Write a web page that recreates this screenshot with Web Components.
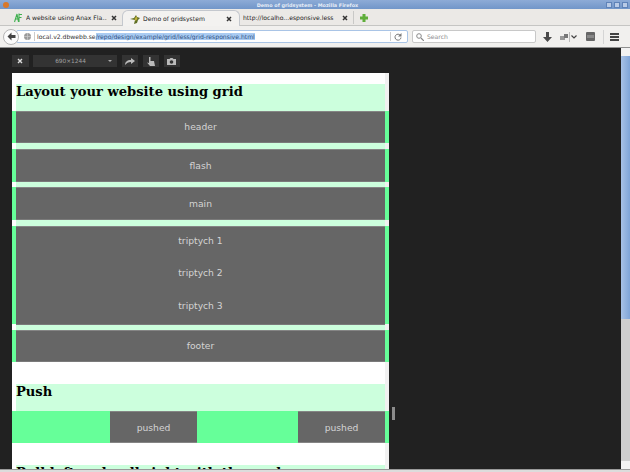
<!DOCTYPE html>
<html>
<head>
<meta charset="utf-8">
<title>Demo of gridsystem</title>
<style>
html, body { margin: 0; height: 100%; overflow: hidden; background: #212121; }
body { font-family: "DejaVu Sans", sans-serif; }
</style>
</head>
<body>
<fx-window>
    <fx-titlebar slot="top">Demo of gridsystem - Mozilla Firefox</fx-titlebar>
    <fx-tabs slot="top">
        <fx-tab icon="anax" style="width:114px">A website using Anax Fla...</fx-tab>
        <fx-tab icon="grid" active style="width:118px">Demo of gridsystem</fx-tab>
        <fx-tab style="width:113px">http://localho...esponsive.less</fx-tab>
    </fx-tabs>
    <fx-navbar slot="top"></fx-navbar>
    <rd-stage>
        <demo-page>
            <demo-heading>Layout your website using grid</demo-heading>
            <demo-row>header</demo-row>
            <demo-gap></demo-gap>
            <demo-row>flash</demo-row>
            <demo-gap></demo-gap>
            <demo-row>main</demo-row>
            <demo-gap></demo-gap>
            <demo-row tall><span>triptych 1</span><span>triptych 2</span><span>triptych 3</span></demo-row>
            <demo-gap></demo-gap>
            <demo-row>footer</demo-row>
            <demo-spacer></demo-spacer>
            <demo-heading>Push</demo-heading>
            <demo-push></demo-push>
            <demo-spacer></demo-spacer>
            <demo-heading>Pull left and pull right with the push</demo-heading>
        </demo-page>
    </rd-stage>
</fx-window>

<script>
function define(name, html) {
    customElements.define(name, class extends HTMLElement {
        constructor() {
            super();
            this.attachShadow({ mode: 'open' }).innerHTML = html;
        }
    });
}

define('fx-window', `
    <style>
        :host { display: flex; flex-direction: column; width: 630px; height: 472px; overflow: hidden; background: #212121; }
        .foot { height: 3px; background: #dcdcdc; border-top: 1px solid #9a9a9a; box-sizing: border-box; flex: none; }
    </style>
    <slot name="top"></slot>
    <slot></slot>
    <div class="foot"></div>
`);

define('fx-titlebar', `
    <style>
        :host { display: flex; align-items: center; height: 9px; flex: none; background: linear-gradient(#8dabd6, #7196c9); color: #e6edf7; font: bold 4.9px "DejaVu Sans", sans-serif; }
        .title { flex: 1; text-align: center; white-space: nowrap; }
        .logo { width: 6px; height: 6px; border-radius: 50%; background: #d9782a; margin-left: 3px; }
        .btns { display: flex; gap: 2px; margin-right: 2px; }
        .btns i { width: 4px; height: 4px; background: #b9cbe6; border: 1px solid #5f83b8; }
    </style>
    <span class="logo"></span>
    <span class="title"><slot></slot></span>
    <span class="btns"><i></i><i></i><i></i></span>
`);

define('fx-tabs', `
    <style>
        :host { display: flex; align-items: flex-end; height: 17px; box-sizing: border-box; flex: none; background: #ebe9e6; padding-left: 8px; border-bottom: 1px solid #c5c5c3; }
        .add { display: flex; align-items: center; height: 13px; padding-left: 6px; border-left: 1px solid #c9c9c7; margin-bottom: 1px; }
    </style>
    <slot></slot>
    <div class="add">
        <svg width="8" height="8" viewBox="0 0 8 8"><path d="M2.500 0h3v2.500H8v3H5.500V8h-3V5.500H0v-3h2.500z" fill="#5fae3a"/></svg>
    </div>
`);

class FxTab extends HTMLElement {
    constructor() {
        super();
        const icon = this.getAttribute('icon');
        const icons = {
            anax: '<svg width="8" height="10" viewBox="0 0 8 10"><path d="M.5 9 3 1l1.500 8M1.500 6h4M5 .5V9M5 1.500h3M5 4.500h2.500" fill="none" stroke="#3fb04f" stroke-width="1.100"/></svg>',
            grid: '<svg width="10" height="10" viewBox="0 0 10 10"><path d="M0 5 4 4 6 1l1 2 3 1-2 2-1 3-3 1 1-4z" fill="#5f6f25"/><path d="M4.500 5l2-3 1 3-2 2z" fill="#c2b23a"/></svg>'
        };
        this.attachShadow({ mode: 'open' }).innerHTML = `
        <style>
            :host { display: flex; align-items: center; gap: 4px; height: 15px; flex: none; box-sizing: border-box; padding: 0 5px 0 6px; font: 6.1px "DejaVu Sans", sans-serif; color: #222; white-space: nowrap; overflow: hidden; }
            :host([active]) { gap: 3px; height: 16px; padding: 0 7px 0 7px; margin-bottom: -1px; background: #f3f2f0; border: 1px solid #c4c8ce; border-bottom: none; border-radius: 6px 6px 0 0; }
            :host(:not([icon])) { padding-left: 3px; padding-right: 5px; }
            .label { flex: 1; min-width: 0; overflow: hidden; }
        </style>
        ${icon ? icons[icon] : ''}
        <span class="label"><slot></slot></span>
        <svg width="6" height="6" viewBox="0 0 6 6"><path d="M1 1l4 4M5 1 1 5" stroke="#333" stroke-width="1.500"/></svg>`;
    }
}
customElements.define('fx-tab', FxTab);

define('fx-navbar', `
    <style>
        :host { display: flex; align-items: center; height: 22px; box-sizing: border-box; flex: none; background: #f1f0ee; border-bottom: 1px solid #8f8f8f; font: 6.1px "DejaVu Sans", sans-serif; color: #333; padding-left: 3px; }
        .back { width: 16px; height: 16px; border-radius: 50%; background: #fbfbfb; border: 1px solid #b5b5b5; display: flex; align-items: center; justify-content: center; flex: none; box-sizing: border-box; margin-right: -3px; z-index: 1; }
        .url { width: 392px; height: 13px; flex: none; box-sizing: border-box; display: flex; align-items: center; background: #fff; border: 1px solid #a9c4e6; border-radius: 2px; padding-left: 7px; white-space: nowrap; }
        .globe { margin-right: 3px; flex: none; }
        .sep { width: 1px; height: 9px; background: #ccc; margin-right: 2px; flex: none; }
        .sel { background: #a9cbf2; color: #2d4f82; }
        .reload { margin-left: auto; display: flex; align-items: center; gap: 3px; padding-right: 5px; }
        .search { width: 124px; height: 13px; margin-left: 4px; flex: none; box-sizing: border-box; display: flex; align-items: center; gap: 3px; background: #fff; border: 1px solid #c8c8c8; border-radius: 2px; padding-left: 3px; color: #8d8d8d; }
        .tools { display: flex; align-items: center; margin-left: 7px; flex: none; }
    </style>
    <div class="back">
        <svg width="9" height="9" viewBox="0 0 9 9"><path d="M4.500 .500.500 4.500l4 4V6H8.500V3H4.500z" fill="#444"/></svg>
    </div>
    <div class="url">
        <svg class="globe" width="7" height="7" viewBox="0 0 7 7"><circle cx="3.500" cy="3.500" r="3.500" fill="#9a9a9a"/><path d="M0 3.500h7M3.500 0v7" stroke="#ccc" stroke-width=".7"/></svg>
        <span class="sep"></span>
        <span>local.v2.dbwebb.se</span><span class="sel">/repo/design/example/grid/less/grid-responsive.html</span>
        <span class="reload">
            <span class="sep" style="margin:0"></span>
            <svg width="8" height="8" viewBox="0 0 8 8"><path d="M6.500 2.500A3 3 0 1 0 7 4.500" fill="none" stroke="#777" stroke-width="1"/><path d="M7.500 0v3.500H4z" fill="#777"/></svg>
        </span>
    </div>
    <div class="search">
        <svg width="8" height="8" viewBox="0 0 8 8"><circle cx="3" cy="3" r="2.300" fill="none" stroke="#888"/><path d="M5 5l3 3" stroke="#888" stroke-width="1.200"/></svg>
        <span>Search</span>
    </div>
    <div class="tools">
        <svg width="9" height="10" viewBox="0 0 9 10" style="margin-right:8px"><path d="M3 0h3v5h3L4.500 10 0 5h3z" fill="#4a4a4a"/></svg>
        <svg width="8" height="8" viewBox="0 0 8 8"><rect x="0" y="3" width="5" height="4" fill="#999"/><rect x="4" y="1" width="4" height="4" fill="#777"/></svg>
        <span style="width:1px;height:10px;background:#bbb;margin-left:1px"></span>
        <svg width="6" height="6" viewBox="0 0 6 6" style="margin-left:1px"><path d="M.5 1.500 3 4l2.500-2.500" fill="none" stroke="#444" stroke-width="1.200"/></svg>
        <svg width="9" height="9" viewBox="0 0 9 9" style="margin-left:9px"><rect width="9" height="9" rx="1" fill="#666"/><rect x="1" y="3" width="7" height="3" fill="#888"/></svg>
        <span style="width:1px;height:14px;background:#d5d5d5;margin-left:8px"></span>
        <svg width="9" height="8" viewBox="0 0 9 8" style="margin-left:6px"><path d="M0 0h9v2H0zM0 3h9v2H0zM0 6h9v2H0z" fill="#444"/></svg>
    </div>
`);

define('rd-stage', `
    <style>
        :host { display: flex; flex: 1; min-height: 0; background: #212121; position: relative; }
        .main { flex: 1; min-width: 0; padding: 7px 0 0 12px; display: flex; flex-direction: column; overflow: hidden; }
        .tools { display: flex; align-items: center; gap: 4.500px; height: 12px; flex: none; margin-bottom: 6px; }
        .tools > div { height: 12px; background: #333; color: #a0a0a0; display: flex; align-items: center; justify-content: center; }
        .btn { width: 16.500px; }
        .size { width: 84px; box-sizing: border-box; padding-right: 9px; font: 5.800px "DejaVu Sans", sans-serif; position: relative; }
        .size::after { content: ""; position: absolute; right: 5px; top: 5px; border: 2px solid transparent; border-top-color: #aaa; border-bottom: none; }
        .view { width: 377px; flex: 1; min-height: 0; overflow: hidden; background: #fff; }
        .thumb { position: absolute; left: 392px; top: 359px; width: 3px; height: 13px; background: #8c8c8c; }
        .bar { width: 9px; flex: none; background: #cfcfcf; display: flex; flex-direction: column; }
        .bar i { display: block; height: 8px; flex: none; background: #f2f2f2; }
        .bar b { display: block; height: 263px; flex: none; background: linear-gradient(90deg, #a8c2e6, #7fa5d8); }
        .bar u { flex: 1; }
    </style>
    <div class="main">
        <div class="tools">
            <div class="btn"><svg width="6" height="6" viewBox="0 0 6 6"><path d="M1 1l4 4M5 1 1 5" stroke="#ddd" stroke-width="1.400"/></svg></div>
            <div class="size">690×1244</div>
            <div class="btn"><svg width="10" height="7" viewBox="0 0 10 7"><path d="M0 7c0-3 2-5 6-5V0l4 3-4 3V4C3 4 2 5 0 7z" fill="#bbb"/></svg></div>
            <div class="btn"><svg width="8" height="9" viewBox="0 0 8 9"><path d="M2 0h1.500v4H7l1 5H3L0 5.500 2 6z" fill="#bbb"/></svg></div>
            <div class="btn"><svg width="9" height="7" viewBox="0 0 9 7"><path d="M0 1h2.500l1-1h2l1 1H9v6H0z" fill="#bbb"/><circle cx="4.500" cy="4" r="1.800" fill="#333"/></svg></div>
        </div>
        <div class="view"><slot></slot></div>
        <div class="thumb"></div>
    </div>
    <div class="bar"><i></i><b></b><u></u><i></i></div>
`);

define('demo-page', `
    <style>
        :host { display: block; padding: 11px 4px 0 0; background: linear-gradient(#f1f1f1, #f1f1f1) no-repeat right top / 4px 100%, #fff; }
    </style>
    <slot></slot>
`);

define('demo-heading', `
    <style>
        :host { display: block; margin-left: 4px; height: 26.500px; background: #ccffdd; color: #000; font: bold 13.100px/15px "DejaVu Serif", serif; white-space: nowrap; overflow: hidden; }
    </style>
    <slot></slot>
`);

define('demo-row', `
    <style>
        :host { display: flex; flex-direction: column; height: 32.700px; padding: 0 4px; margin-right: -4px; box-sizing: border-box; background: #66ff99; color: #d4d4d4; font: 9.200px "DejaVu Sans", sans-serif; }
        :host([tall]) { height: 98.300px; }
        .cell { flex: 1; background: #666; border-top: 1px solid #858585; border-bottom: 1px solid #7a7a7a; display: flex; flex-direction: column; align-items: center; justify-content: center; }
        ::slotted(span) { display: block; height: 32.500px; line-height: 28px; }
    </style>
    <div class="cell"><slot></slot></div>
`);

define('demo-gap', `
    <style>
        :host { display: block; height: 5.700px; margin-left: 4px; background: #ccffdd; }
    </style>
`);

define('demo-spacer', `
    <style>
        :host { display: block; height: 22px; }
    </style>
`);

define('demo-push', `
    <style>
        :host { display: grid; grid-template-columns: 98px 87px 101px 87px; height: 32.600px; background: #66ff99; margin-right: -4px; padding-right: 4px; color: #d4d4d4; font: 9.200px "DejaVu Sans", sans-serif; }
        .p { grid-column: 2; background: #666; border-top: 1px solid #858585; border-bottom: 1px solid #858585; display: flex; align-items: center; justify-content: center; }
        .p + .p { grid-column: 4; }
    </style>
    <div class="p">pushed</div><div class="p">pushed</div>
`);
</script>
</body>
</html>
